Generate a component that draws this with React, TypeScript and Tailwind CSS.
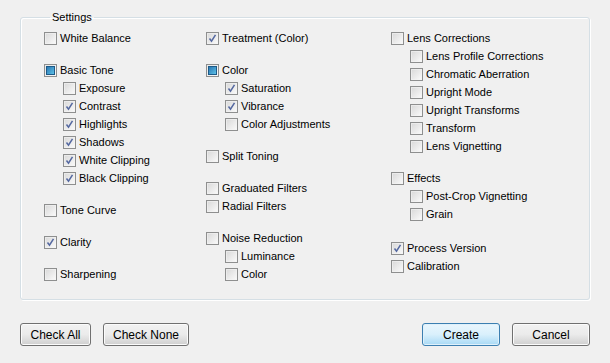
import * as React from 'react';

type CheckState = 'off' | 'on' | 'mixed';

interface Item {
  label: string;
  state: CheckState;
  children?: Item[];
}

interface Group {
  items: Item[];
  gap?: string;
}

const columns: { width: string; groups: Group[] }[] = [
  {
    width: 'w-[162px]',
    groups: [
      { items: [{ label: 'White Balance', state: 'off' }] },
      {
        items: [
          {
            label: 'Basic Tone',
            state: 'mixed',
            children: [
              { label: 'Exposure', state: 'off' },
              { label: 'Contrast', state: 'on' },
              { label: 'Highlights', state: 'on' },
              { label: 'Shadows', state: 'on' },
              { label: 'White Clipping', state: 'on' },
              { label: 'Black Clipping', state: 'on' },
            ],
          },
        ],
      },
      { items: [{ label: 'Tone Curve', state: 'off' }] },
      { items: [{ label: 'Clarity', state: 'on' }] },
      { items: [{ label: 'Sharpening', state: 'off' }] },
    ],
  },
  {
    width: 'w-[185px]',
    groups: [
      { items: [{ label: 'Treatment (Color)', state: 'on' }] },
      {
        items: [
          {
            label: 'Color',
            state: 'mixed',
            children: [
              { label: 'Saturation', state: 'on' },
              { label: 'Vibrance', state: 'on' },
              { label: 'Color Adjustments', state: 'off' },
            ],
          },
        ],
      },
      { items: [{ label: 'Split Toning', state: 'off' }] },
      {
        items: [
          { label: 'Graduated Filters', state: 'off' },
          { label: 'Radial Filters', state: 'off' },
        ],
      },
      {
        items: [
          {
            label: 'Noise Reduction',
            state: 'off',
            children: [
              { label: 'Luminance', state: 'off' },
              { label: 'Color', state: 'off' },
            ],
          },
        ],
      },
    ],
  },
  {
    width: 'flex-1',
    groups: [
      {
        items: [
          {
            label: 'Lens Corrections',
            state: 'off',
            children: [
              { label: 'Lens Profile Corrections', state: 'off' },
              { label: 'Chromatic Aberration', state: 'off' },
              { label: 'Upright Mode', state: 'off' },
              { label: 'Upright Transforms', state: 'off' },
              { label: 'Transform', state: 'off' },
              { label: 'Lens Vignetting', state: 'off' },
            ],
          },
        ],
      },
      {
        items: [
          {
            label: 'Effects',
            state: 'off',
            children: [
              { label: 'Post-Crop Vignetting', state: 'off' },
              { label: 'Grain', state: 'off' },
            ],
          },
        ],
      },
      {
        gap: 'mt-[16px]',
        items: [
          { label: 'Process Version', state: 'on' },
          { label: 'Calibration', state: 'off' },
        ],
      },
    ],
  },
];

function Box({ state }: { state: CheckState }) {
  return (
    <span className="flex h-[13px] w-[13px] shrink-0 items-center justify-center border border-[#8e8f8f] bg-gradient-to-br from-[#d8d8d8] to-[#fbfbfb]">
      <span className="flex h-[11px] w-[11px] items-center justify-center border border-[#f4f4f4]/60">
        {state === 'on' && (
          <svg width="9" height="9" viewBox="0 0 9 9">
            <path d="M1.5 4.5 L3.5 7.2 L7.5 0.8" fill="none" stroke="#5468a0" strokeWidth="1.5" />
          </svg>
        )}
        {state === 'mixed' && (
          <span className="h-[9px] w-[9px] border border-[#1d5a88] bg-gradient-to-br from-[#2a78b3] to-[#5dc0e6]" />
        )}
      </span>
    </span>
  );
}

function Row({ item, nested }: { item: Item; nested?: boolean }) {
  return (
    <>
      <div className={`flex h-[18px] items-center gap-[3px] ${nested ? 'pl-[19px]' : ''}`}>
        <Box state={item.state} />
        <span className="whitespace-nowrap leading-none">{item.label}</span>
      </div>
      {item.children?.map((c) => (
        <Row key={c.label} item={c} nested />
      ))}
    </>
  );
}

function Button({ label, primary, width }: { label: string; primary?: boolean; width: string }) {
  return (
    <button
      type="button"
      className={`h-[23px] ${width} rounded-[3px] border text-[12px] leading-none text-black ${
        primary
          ? 'border-[#3c7fb1] bg-gradient-to-b from-[#eaf6fd] via-[#d9f0fc] to-[#a7d9f5] shadow-[inset_0_0_0_1px_#dff1fb]'
          : 'border-[#707070] bg-gradient-to-b from-[#f2f2f2] via-[#ebebeb] to-[#cfcfcf] shadow-[inset_0_0_0_1px_#fbfbfb]'
      }`}
    >
      {label}
    </button>
  );
}

export default function App() {
  return (
    <div className="flex h-[363px] w-[610px] flex-col bg-[#f0f0f0] px-[20px] pt-[10px] font-['Liberation_Sans',Arial,sans-serif] text-[11px] text-black">
      <fieldset className="h-[290px] rounded-[3px] border border-[#d5dfe5] pl-[23px] pt-[5px] shadow-[inset_1px_1px_0_#ffffff,1px_1px_0_#ffffff]">
        <legend className="ml-[6px] px-[2px] text-[11px] leading-[14px]">Settings</legend>
        <div className="flex">
          {columns.map((col, i) => (
            <div key={i} className={`flex flex-col ${col.width}`}>
              {col.groups.map((g, j) => (
                <div key={j} className={j === 0 ? '' : g.gap ?? 'mt-[14px]'}>
                  {g.items.map((it) => (
                    <Row key={it.label} item={it} />
                  ))}
                </div>
              ))}
            </div>
          ))}
        </div>
      </fieldset>
      <div className="mt-[23px] flex items-center">
        <div className="flex gap-[12px]">
          <Button label="Check All" width="w-[71px]" />
          <Button label="Check None" width="w-[86px]" />
        </div>
        <div className="ml-auto flex gap-[12px]">
          <Button label="Create" primary width="w-[78px]" />
          <Button label="Cancel" width="w-[78px]" />
        </div>
      </div>
    </div>
  );
}
